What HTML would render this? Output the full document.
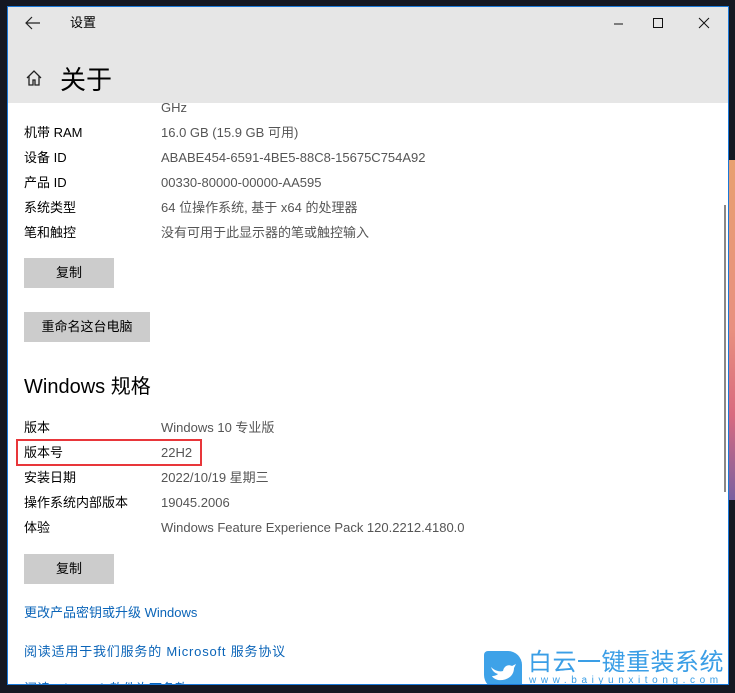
<!DOCTYPE html><html><head><meta charset="utf-8"><style>
*{margin:0;padding:0;box-sizing:border-box}
body{width:735px;height:693px;background:#151822;position:relative;overflow:hidden;font-family:"Liberation Sans","Noto Sans CJK SC",sans-serif;font-size:13px;color:#000}
.wp{position:absolute;left:728px;top:160px;width:7px;height:340px;background:linear-gradient(#e8a070,#e89080 50%,#d86a80 75%,#7a60a0)}
.win{position:absolute;left:7px;top:6px;width:722px;height:679px;border:1px solid #1a78d8;background:#fff;overflow:hidden}
.hd{position:absolute;left:0;top:0;width:720px;height:96px;background:#e6e6e6}
.t{position:absolute;white-space:nowrap;line-height:16px}
.v{color:#555}
.btn{position:absolute;background:#ccc;text-align:center;line-height:30px;height:30px}
.lk{color:#0a64b8}
</style></head><body>
<div class="wp"></div>
<div class="win">
<div class="hd">
<svg style="position:absolute;left:17px;top:9px" width="16" height="14"><path d="M1 7H15M7 1L1 7L7 13" stroke="#222" stroke-width="1.2" fill="none"/></svg>
<div class="t" style="left:62px;top:8px;font-size:13px">设置</div>
<svg style="position:absolute;left:598px;top:10px" width="120" height="14"><path d="M8 7H17" stroke="#111" stroke-width="1"/><rect x="47.5" y="1.5" width="9" height="9" stroke="#111" fill="none"/><path d="M93 1L103 11M103 1L93 11" stroke="#111"/></svg>
<svg style="position:absolute;left:17px;top:62px" width="18" height="18"><path d="M2 9L9 2L16 9M4 7V16H8V11H10V16H14V7" stroke="#222" stroke-width="1.3" fill="none"/></svg>
<div class="t" style="left:52px;top:58px;font-size:26px;line-height:30px">关于</div>
</div>
<div class="t v" style="left:153px;top:93px">GHz</div>
<div class="t" style="left:16px;top:118px">机带 RAM</div><div class="t v" style="left:153px;top:118px">16.0 GB (15.9 GB 可用)</div>
<div class="t" style="left:16px;top:143px">设备 ID</div><div class="t v" style="left:153px;top:143px">ABABE454-6591-4BE5-88C8-15675C754A92</div>
<div class="t" style="left:16px;top:168px">产品 ID</div><div class="t v" style="left:153px;top:168px">00330-80000-00000-AA595</div>
<div class="t" style="left:16px;top:193px">系统类型</div><div class="t v" style="left:153px;top:193px">64 位操作系统, 基于 x64 的处理器</div>
<div class="t" style="left:16px;top:218px">笔和触控</div><div class="t v" style="left:153px;top:218px">没有可用于此显示器的笔或触控输入</div>
<div class="btn" style="left:16px;top:251px;width:90px">复制</div>
<div class="btn" style="left:16px;top:305px;width:126px">重命名这台电脑</div>
<div class="t" style="left:16px;top:368px;font-size:20px;line-height:24px">Windows 规格</div>
<div class="t" style="left:16px;top:413px">版本</div><div class="t v" style="left:153px;top:413px">Windows 10 专业版</div>
<div class="t" style="left:16px;top:438px">版本号</div><div class="t v" style="left:153px;top:438px">22H2</div>
<div style="position:absolute;left:8px;top:432px;width:186px;height:27px;border:2px solid #e8363a"></div>
<div class="t" style="left:16px;top:463px">安装日期</div><div class="t v" style="left:153px;top:463px">2022/10/19 星期三</div>
<div class="t" style="left:16px;top:488px">操作系统内部版本</div><div class="t v" style="left:153px;top:488px">19045.2006</div>
<div class="t" style="left:16px;top:513px">体验</div><div class="t v" style="left:153px;top:513px">Windows Feature Experience Pack 120.2212.4180.0</div>
<div class="btn" style="left:16px;top:547px;width:90px">复制</div>
<div class="t lk" style="left:16px;top:598px">更改产品密钥或升级 Windows</div>
<div class="t lk" style="left:16px;top:637px;letter-spacing:0.8px">阅读适用于我们服务的 Microsoft 服务协议</div>
<div class="t lk" style="left:16px;top:674px">阅读 Microsoft 软件许可条款</div>
<div style="position:absolute;left:716px;top:198px;width:2px;height:287px;background:#888"></div>
<div style="position:absolute;left:476px;top:644px;width:38px;height:38px;background:#3ea2e8;border-radius:4px 14px 4px 14px"></div>
<svg style="position:absolute;left:481px;top:652px" width="28" height="24"><path d="M2 8C6 12 11 13 14 12C15 7 19 5 23 7L27 5L25 9C25 17 18 22 9 21C6 20 4 19 3 17C6 17 8 16 9 15C5 14 3 11 2 8Z" fill="#fff"/></svg>
<div class="t" style="left:520px;top:643px;font-size:24px;line-height:26px;color:#3a9ee6;letter-spacing:0.5px">白云一键重装系统</div>
<div class="t" style="left:521px;top:669px;font-size:10px;line-height:10px;color:#3a9ee6;letter-spacing:4.6px">www.baiyunxitong.com</div>
</div>
</body></html>
